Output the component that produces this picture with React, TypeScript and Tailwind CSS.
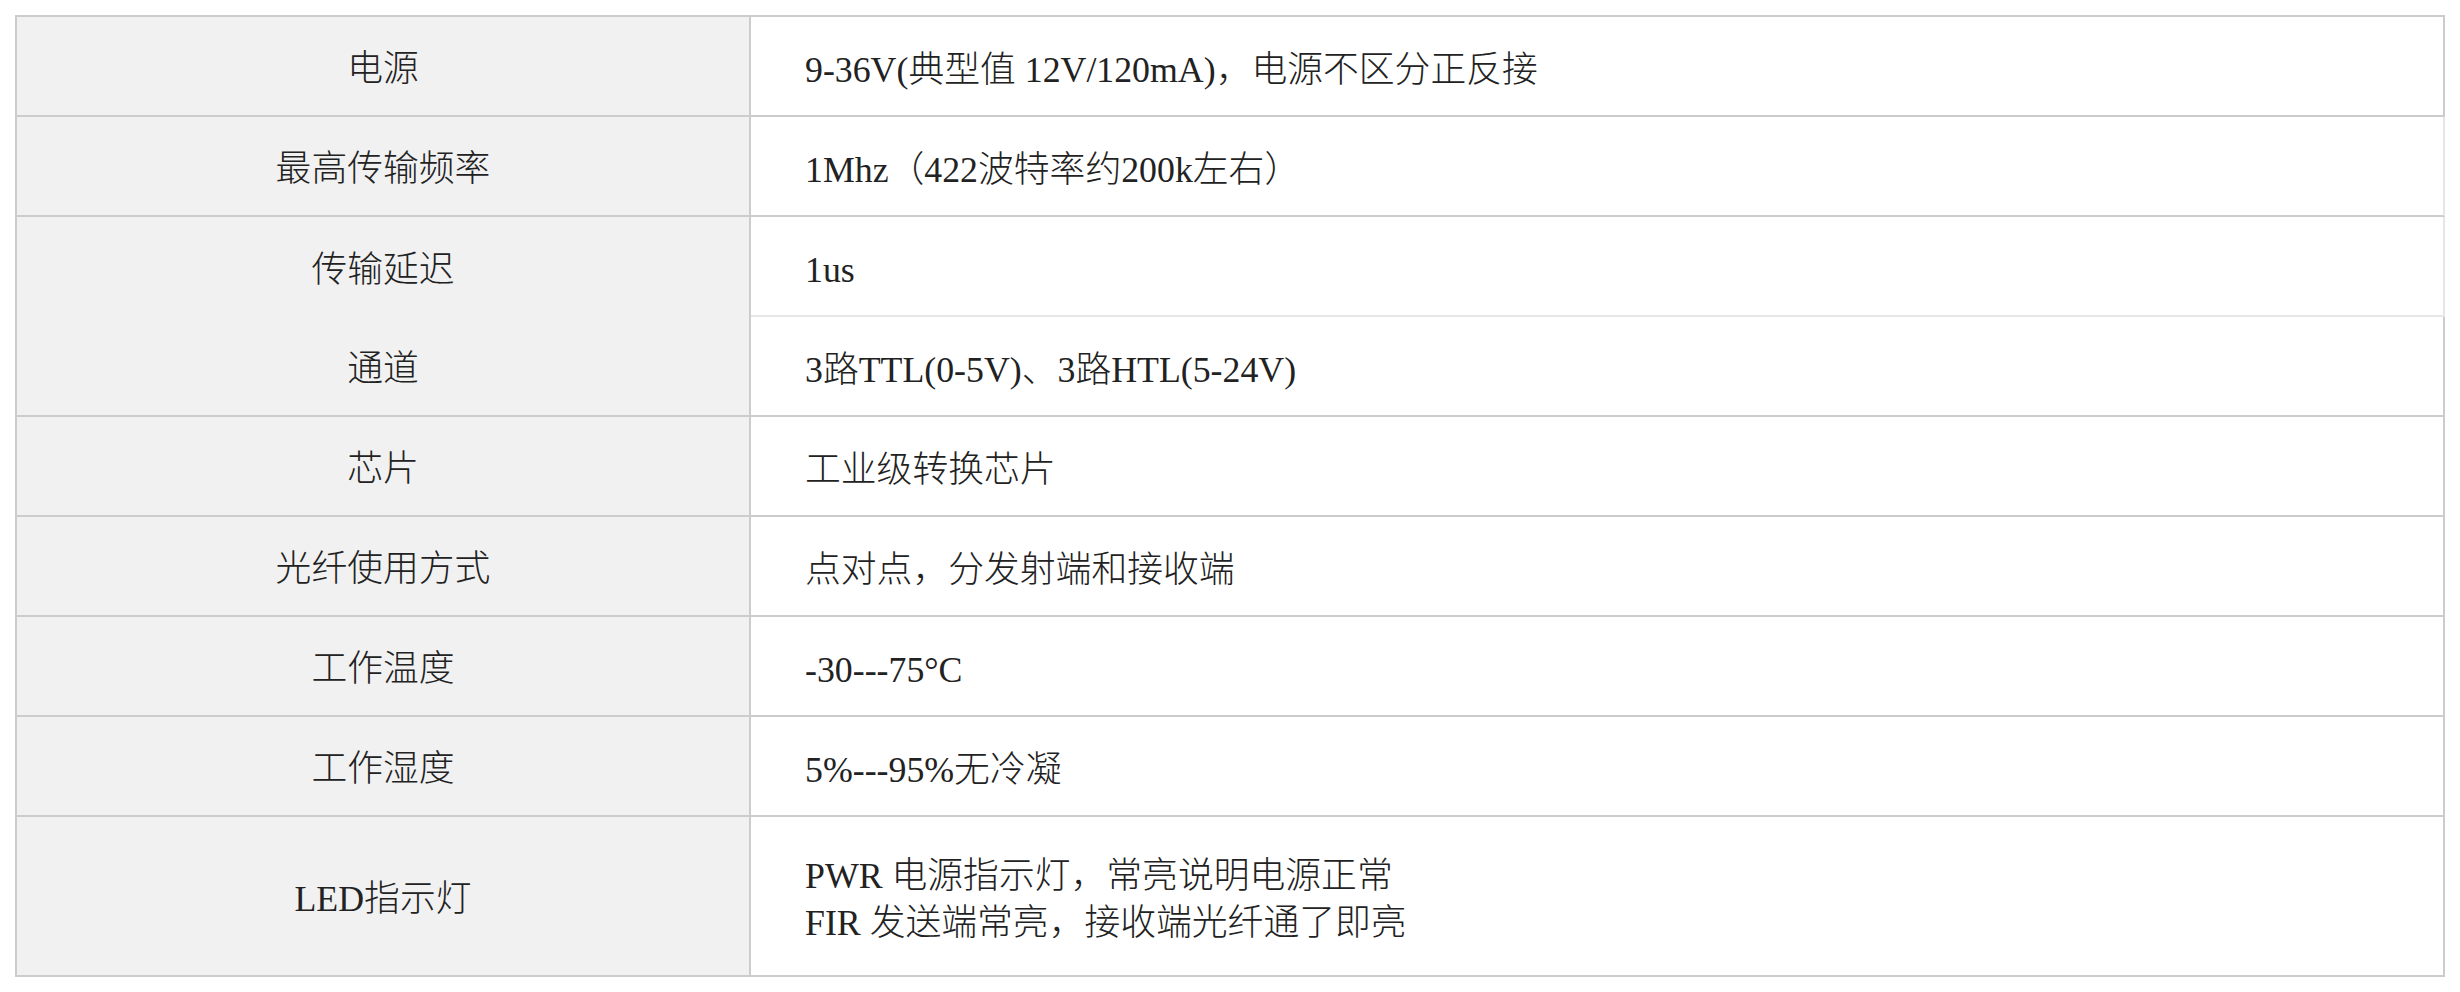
type Row = {
  label: string;
  value: string[];
  tall?: boolean;
  // separators under the row, per column, and colour of the right outer edge
  leftBottom: boolean;
  rightBottom: 'dark' | 'light' | 'none';
  rightEdge: 'dark' | 'light';
};

const rows: Row[] = [
  { label: '电源', value: ['9-36V(典型值 12V/120mA)，电源不区分正反接'], leftBottom: true, rightBottom: 'dark', rightEdge: 'dark' },
  { label: '最高传输频率', value: ['1Mhz（422波特率约200k左右）'], leftBottom: true, rightBottom: 'dark', rightEdge: 'light' },
  { label: '传输延迟', value: ['1us'], leftBottom: false, rightBottom: 'light', rightEdge: 'light' },
  { label: '通道', value: ['3路TTL(0-5V)、3路HTL(5-24V)'], leftBottom: true, rightBottom: 'dark', rightEdge: 'dark' },
  { label: '芯片', value: ['工业级转换芯片'], leftBottom: true, rightBottom: 'dark', rightEdge: 'dark' },
  { label: '光纤使用方式', value: ['点对点，分发射端和接收端'], leftBottom: true, rightBottom: 'dark', rightEdge: 'dark' },
  { label: '工作温度', value: ['-30---75°C'], leftBottom: true, rightBottom: 'dark', rightEdge: 'dark' },
  { label: '工作湿度', value: ['5%---95%无冷凝'], leftBottom: true, rightBottom: 'dark', rightEdge: 'dark' },
  {
    label: 'LED指示灯',
    value: ['PWR 电源指示灯，常亮说明电源正常', 'FIR 发送端常亮，接收端光纤通了即亮'],
    tall: true,
    leftBottom: false,
    rightBottom: 'none',
    rightEdge: 'dark',
  },
];

const SpecRow = ({ row }: { row: Row }) => {
  const height = row.tall ? 'h-[158px]' : 'h-[100px]';
  const leftBorder = row.leftBottom ? 'border-b-2 border-[#cccccc]' : '';
  const rightBorder =
    row.rightBottom === 'dark'
      ? 'border-b-2 border-b-[#cccccc]'
      : row.rightBottom === 'light'
        ? 'border-b-2 border-b-[#e6e6e6]'
        : '';
  const edge = row.rightEdge === 'dark' ? 'border-r-[#cccccc]' : 'border-r-[#e6e6e6]';

  return (
    <div className="flex">
      <div
        className={`w-[734px] shrink-0 ${height} ${leftBorder} bg-[#f1f1f1] border-r-2 border-r-[#cccccc] flex items-center justify-center pt-2`}
      >
        {row.label}
      </div>
      <div className={`flex-1 ${height} ${rightBorder} border-r-2 ${edge} bg-white flex flex-col justify-center pl-[54px] pt-2`}>
        {row.value.map((line) => (
          <div key={line} className="leading-[47px]">
            {line}
          </div>
        ))}
      </div>
    </div>
  );
};

const App = () => {
  return (
    <div className="min-h-screen bg-white p-[15px] text-[#222222] text-[35.8px] font-light font-['Liberation_Serif','Noto_Sans_CJK_SC',serif]">
      <div className="border-l-2 border-t-2 border-b-2 border-[#cccccc]">
        {rows.map((row) => (
          <SpecRow key={row.label} row={row} />
        ))}
      </div>
    </div>
  );
};

export default App;
